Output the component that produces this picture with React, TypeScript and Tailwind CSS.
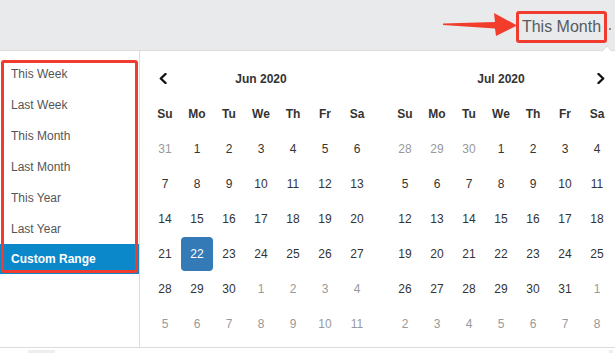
import React from "react";

const ranges = ["This Week", "Last Week", "This Month", "Last Month", "This Year", "Last Year", "Custom Range"];
const weekdays = ["Su", "Mo", "Tu", "We", "Th", "Fr", "Sa"];

type Day = { d: number; off?: boolean; active?: boolean };

function buildMonth(prevTail: number[], days: number, nextCount: number, active?: number): Day[] {
  const out: Day[] = prevTail.map((d) => ({ d, off: true }));
  for (let i = 1; i <= days; i++) out.push({ d: i, active: i === active });
  for (let i = 1; i <= nextCount; i++) out.push({ d: i, off: true });
  return out;
}

const june = buildMonth([31], 30, 11, 22);
const july = buildMonth([28, 29, 30], 31, 8);

function Chevron({ dir }: { dir: "left" | "right" }) {
  return (
    <svg width="8" height="11" viewBox="0 0 8 11" fill="none">
      <polyline
        points={dir === "left" ? "6.5,1 1.8,5.5 6.5,10" : "1.5,1 6.2,5.5 1.5,10"}
        stroke="#111"
        strokeWidth="2.4"
        strokeLinecap="round"
        strokeLinejoin="round"
      />
    </svg>
  );
}

function Calendar({ title, days, side }: { title: string; days: Day[]; side: "left" | "right" }) {
  const rows: Day[][] = [];
  for (let i = 0; i < 6; i++) rows.push(days.slice(i * 7, i * 7 + 7));
  return (
    <div className="w-[224px]">
      <div className="grid h-[35px] grid-cols-7 items-center">
        <div className="flex justify-center">
          {side === "left" && (
            <span className="-translate-x-[2px]">
              <Chevron dir="left" />
            </span>
          )}
        </div>
        <div className="col-span-5 text-center text-[12px] font-bold text-[#333]">{title}</div>
        <div className="flex justify-center">
          {side === "right" && (
            <span className="translate-x-[4px]">
              <Chevron dir="right" />
            </span>
          )}
        </div>
      </div>
      <div className="grid h-[35px] grid-cols-7 items-center">
        {weekdays.map((w) => (
          <div key={w} className="text-center text-[12px] font-bold text-[#333]">
            {w}
          </div>
        ))}
      </div>
      {rows.map((row, ri) => (
        <div key={ri} className="grid h-[35px] grid-cols-7 items-center">
          {row.map((c, ci) => (
            <div key={ci} className="flex justify-center">
              {c.active ? (
                <div className="flex h-[34px] w-[32px] items-center justify-center rounded-[4px] bg-[#337ab7] text-[12px] text-white">
                  {c.d}
                </div>
              ) : (
                <span className={c.off ? "text-[12px] text-[#999]" : "text-[12px] text-[#333]"}>{c.d}</span>
              )}
            </div>
          ))}
        </div>
      ))}
    </div>
  );
}

export default function App() {
  return (
    <div className="relative h-[353px] w-[615px] overflow-hidden bg-white font-['Liberation_Sans',Arial,sans-serif]">
      {/* top bar */}
      <header className="relative flex h-[51px] items-start justify-end border-b border-[#dcdcdc] bg-[#e9eaec] pr-[4px] pt-[11px]">
        <div className="flex h-[32px] w-[91px] items-center justify-center rounded-[3px] border-[3px] border-[#f03c2e] text-[16px] text-[#555b61]">
          This Month
        </div>
        <span className="ml-[2px] mt-[17px] h-[2px] w-[2px] bg-[#888]" />
        <svg className="absolute left-[440px] top-[10px]" width="80" height="30" viewBox="440 10 80 30">
          <polygon points="443,23.6 495,22 494,13 517,25.5 496,36 495,28.5 443,25" fill="#f23d2c" />
        </svg>
        <span className="absolute left-[603px] top-[47px] h-[8px] w-[8px] rotate-45 border-l border-t border-[#dcdcdc] bg-white" />
      </header>

      {/* picker body */}
      <div className="flex h-[297px] border-b border-[#dcdcdc]">
        <div className="relative w-[140px] shrink-0 border-r border-[#dcdcdc] pt-[7px]">
          <ul>
            {ranges.map((r) => (
              <li
                key={r}
                className={
                  r === "Custom Range"
                    ? "flex h-[30px] items-center bg-[#0a88c9] pl-[11px] text-[12px] font-bold text-white"
                    : "flex h-[31px] items-center pl-[11px] text-[12px] text-[#555]"
                }
              >
                {r}
              </li>
            ))}
          </ul>
          <div className="pointer-events-none absolute left-[1px] top-[9px] h-[213px] w-[137px] rounded-[3px] border-[3px] border-[#f03c2e]" />
        </div>
        <div className="flex gap-[16px] pl-[9px] pt-[10px]">
          <Calendar title="Jun 2020" days={june} side="left" />
          <Calendar title="Jul 2020" days={july} side="right" />
        </div>
      </div>

      {/* below popup */}
      <div className="flex">
        <span className="ml-[28px] mt-[2px] h-[6px] w-[27px] bg-[#eeeeee]" />
        <span className="ml-auto mr-[2px] mt-[2px] h-[6px] w-[4px] bg-[#eeeeee]" />
      </div>
    </div>
  );
}
